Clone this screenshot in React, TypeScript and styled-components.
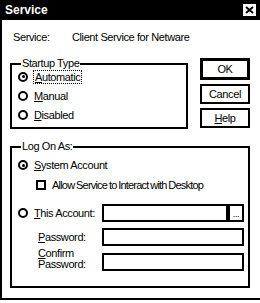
import styled, { createGlobalStyle } from "styled-components";

const GlobalStyle = createGlobalStyle`
  html, body {
    margin: 0;
    padding: 0;
    background: #fff;
  }
  body {
    font-family: "Liberation Sans", Arial, sans-serif;
    font-size: 11px;
    letter-spacing: -0.4px;
    color: #000;
  }
`

const Window = styled.div`
  width: 258px;
  height: 298px;
  border-left: 2px solid #000;
  border-bottom: 2px solid #000;
  display: flex;
  flex-direction: column;
  background: #fff;
`

const TitleBar = styled.div`
  height: 20px;
  background: #000;
  color: #fff;
  display: flex;
  align-items: center;
  justify-content: space-between;
  padding: 0 4px 0 3px;
  font-weight: bold;
  font-size: 12px;
  letter-spacing: 0;
`

const CloseBox = styled.div`
  width: 13px;
  height: 12px;
  background: #fff;
  display: flex;
  align-items: center;
  justify-content: center;
`

const Body = styled.div`
  padding: 10px 0 0 8px;
  display: flex;
  flex-direction: column;
`

const ServiceRow = styled.div`
  display: flex;
  height: 13px;
  align-items: center;
  padding-left: 3px;
`

const ServiceLabel = styled.span`
  width: 59px;
`

const TopRow = styled.div`
  display: flex;
  align-items: flex-start;
  margin-top: 14px;
`

const Group = styled.fieldset<{ $width: number; $height: number }>`
  width: ${({ $width }) => $width}px;
  height: ${({ $height }) => $height}px;
  box-sizing: border-box;
  border: 2px solid #000;
  margin: 0;
  padding: 0 0 0 6px;
  display: flex;
  flex-direction: column;
`

const Legend = styled.legend`
  padding: 0 1px;
  margin-left: 3px;
  line-height: 13px;
`

const Options = styled.div<{ $shift: number }>`
  display: flex;
  flex-direction: column;
  margin-top: ${({ $shift }) => $shift}px;
`

const OptionRow = styled.label<{ $indent?: number; $height?: number; $gapTop?: number }>`
  display: flex;
  align-items: center;
  height: ${({ $height }) => $height ?? 19}px;
  padding-left: ${({ $indent }) => $indent ?? 0}px;
  margin-top: ${({ $gapTop }) => $gapTop ?? 0}px;
  gap: 6px;
`

const Radio = styled.span<{ $on?: boolean }>`
  width: 10px;
  height: 10px;
  box-sizing: border-box;
  border: 2px solid #000;
  border-radius: 50%;
  display: flex;
  align-items: center;
  justify-content: center;
  flex-shrink: 0;
  &::after {
    content: "";
    width: 3px;
    height: 3px;
    border-radius: 50%;
    background: ${({ $on }) => ($on ? "#000" : "transparent")};
  }
`

const Check = styled.span`
  width: 10px;
  height: 10px;
  box-sizing: border-box;
  border: 2px solid #000;
  flex-shrink: 0;
`

const Focus = styled.span`
  outline: 1px dotted #000;
  outline-offset: 0;
  padding: 0 1px;
`

const U = styled.span`
  text-decoration: underline;
`

const Tight = styled.span`
  letter-spacing: -0.8px;
  word-spacing: -0.5px;
`

const ButtonColumn = styled.div`
  display: flex;
  flex-direction: column;
  gap: 4px;
  margin-left: 12px;
  margin-top: 1px;
`

const Button = styled.div<{ $default?: boolean }>`
  width: 50px;
  height: ${({ $default }) => ($default ? 22 : 20)}px;
  box-sizing: border-box;
  border: ${({ $default }) => ($default ? 3 : 2)}px solid #000;
  display: flex;
  align-items: center;
  justify-content: center;
`

const LogOnGroup = styled(Group)`
  margin-top: 11px;
`

const FieldRow = styled.div<{ $height?: number; $gapTop?: number; $align?: string }>`
  display: flex;
  align-items: ${({ $align }) => $align ?? "center"};
  height: ${({ $height }) => $height ?? 22}px;
  margin-top: ${({ $gapTop }) => $gapTop ?? 4}px;
`

const FieldLabel = styled.span`
  width: 64px;
  padding-left: 20px;
  line-height: 10.5px;
`

const RadioLabel = styled.label`
  width: 84px;
  display: flex;
  align-items: center;
  gap: 6px;
`

const Input = styled.div<{ $width: number; $drop?: number }>`
  width: ${({ $width }) => $width}px;
  height: 18px;
  margin-top: ${({ $drop }) => $drop ?? 0}px;
  box-sizing: border-box;
  border: 2px solid #000;
`

const Browse = styled.div`
  width: 18px;
  height: 18px;
  box-sizing: border-box;
  border: 2px solid #000;
  border-left-width: 4px;
  margin-left: -2px;
  display: flex;
  align-items: flex-end;
  justify-content: center;
  font-size: 9px;
  line-height: 11px;
`

const App = () => {
  return (
    <>
      <GlobalStyle />
      <Window>
        <TitleBar>
          <span>Service</span>
          <CloseBox>
            <svg width="9" height="8" viewBox="0 0 9 8">
              <path d="M1 1 L8 7 M8 1 L1 7" stroke="#000" strokeWidth="2" />
            </svg>
          </CloseBox>
        </TitleBar>
        <Body>
          <ServiceRow>
            <ServiceLabel>Service:</ServiceLabel>
            <span>Client Service for Netware</span>
          </ServiceRow>
          <TopRow>
            <Group $width={178} $height={72}>
              <Legend>Startup Type</Legend>
              <Options $shift={-3}>
                <OptionRow>
                  <Radio $on />
                  <Focus><U>A</U>utomatic</Focus>
                </OptionRow>
                <OptionRow>
                  <Radio />
                  <span><U>M</U>anual</span>
                </OptionRow>
                <OptionRow>
                  <Radio />
                  <span><U>D</U>isabled</span>
                </OptionRow>
              </Options>
            </Group>
            <ButtonColumn>
              <Button $default>OK</Button>
              <Button>Cancel</Button>
              <Button><U>H</U>elp</Button>
            </ButtonColumn>
          </TopRow>
          <LogOnGroup $width={240} $height={148}>
            <Legend>Log On As:</Legend>
            <OptionRow $height={18} $gapTop={3}>
              <Radio $on />
              <span><U>S</U>ystem Account</span>
            </OptionRow>
            <OptionRow $indent={18} $height={22}>
              <Check />
              <Tight>Allow Service to Interact with Desktop</Tight>
            </OptionRow>
            <FieldRow $gapTop={6}>
              <RadioLabel>
                <Radio />
                <span><U>T</U>his Account:</span>
              </RadioLabel>
              <Input $width={126} />
              <Browse>...</Browse>
            </FieldRow>
            <FieldRow $height={18}>
              <FieldLabel><U>P</U>assword:</FieldLabel>
              <Input $width={142} />
            </FieldRow>
            <FieldRow $height={23} $gapTop={2} $align="flex-start">
              <FieldLabel><U>C</U>onfirm<br />Password:</FieldLabel>
              <Input $width={142} $drop={5} />
            </FieldRow>
          </LogOnGroup>
        </Body>
      </Window>
    </>
  );
}

export default App;
